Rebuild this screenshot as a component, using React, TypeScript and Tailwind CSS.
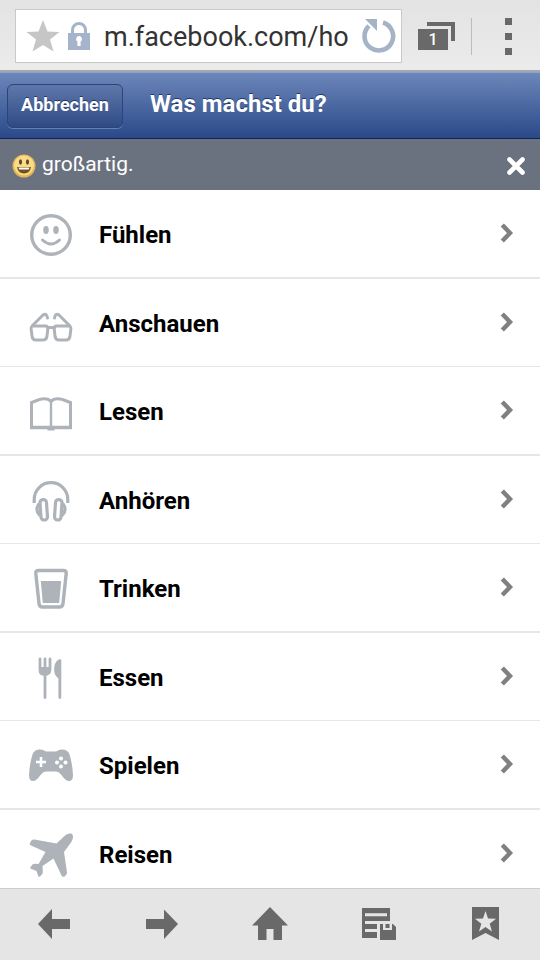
import type { ReactNode } from "react";

const stroke = {
  fill: "none",
  stroke: "currentColor",
  strokeWidth: 3.4,
  strokeLinecap: "round" as const,
  strokeLinejoin: "round" as const,
};

const activities: { label: string; icon: ReactNode }[] = [
  {
    label: "Fühlen",
    icon: (
      <>
        <circle cx="22" cy="22" r="19.300" {...stroke} />
        <ellipse cx="17" cy="17" rx="2.800" ry="4" fill="currentColor" />
        <ellipse cx="27" cy="17" rx="2.800" ry="4" fill="currentColor" />
        <path d="M13.500 27q8.500 8 17 0" {...stroke} strokeWidth={3} />
      </>
    ),
  },
  {
    label: "Anschauen",
    icon: (
      <g {...stroke} strokeWidth={3}>
        <path d="M4 24h12.500q2.500 0 2.300 3l-.8 7q-.5 4-4 4H7q-3.500 0-4-4l-.8-6.500q-.3-3.500 1.800-3.500z" />
        <path d="M40 24H27.500q-2.500 0-2.300 3l.8 7q.5 4 4 4h7q3.500 0 4-4l.8-6.500q.3-3.500-1.800-3.500z" />
        <path d="M18.500 25.500h7" />
        <path d="M3.500 23.500 14 13q3.500-2.500 4.500 3" />
        <path d="M40.500 23.500 30 13q-3.500-2.500-4.500 3" />
      </g>
    ),
  },
  {
    label: "Lesen",
    icon: (
      <g {...stroke} strokeWidth={3} strokeLinecap="butt" strokeLinejoin="miter">
        <path d="M2.500 37.500V12.500l4-1.500q11-4.500 15.500.500 4.500-5 15.500-.5l4 1.500v25" />
        <path d="M22 12v25" strokeWidth="2.400" />
        <path d="M1 37.500h42" strokeWidth="3.400" />
        <path d="M18.500 39h7" />
      </g>
    ),
  },
  {
    label: "Anhören",
    icon: (
      <g {...stroke} strokeWidth={3.2}>
        <path d="M5.200 24v-3.500a16.800 16.800 0 0 1 33.600 0V24" strokeLinecap="butt" />
        <rect x="11.500" y="20.500" width="6.500" height="20.500" rx="3.200" transform="rotate(-4 15 31)" />
        <rect x="26" y="20.500" width="6.500" height="20.500" rx="3.200" transform="rotate(4 29 31)" />
        <path d="M9.500 25.500Q6 31 10.500 36M34.500 25.500q3.500 5.500-1 10.500" />
      </g>
    ),
  },
  {
    label: "Trinken",
    icon: (
      <>
        <path
          d="M9.500 3.500h25q3 0 2.700 3l-3.200 30q-.4 3.500-3.500 3.500h-17q-3.100 0-3.500-3.500l-3.200-30q-.3-3 2.700-3z"
          {...stroke}
        />
        <path d="M11.800 14h20.400l-2 22H13.800z" fill="currentColor" />
      </>
    ),
  },
  {
    label: "Essen",
    icon: (
      <>
        <path d="M11 3v11q0 4.500 4.800 4.500T21 14V3M16 3v38.500" {...stroke} strokeWidth={2.8} />
        <path d="M11 11h10v4q-1 4-5 4t-5-4z" fill="currentColor" />
        <path
          d="M32.300 4.500q0-1.500-2-1.200-3.700 1.200-5 7.200-1.200 8 4.100 12V41q0 2 1.500 2t1.400-2z"
          fill="currentColor"
        />
      </>
    ),
  },
  {
    label: "Spielen",
    icon: (
      <>
        <path
          d="M10 5.500q-5 .5-6.500 5Q.5 20 0 31q0 6 4 6 3.500 0 7.500-6 2.500-3.500 5-3.500h11q2.500 0 5 3.500 4 6 7.500 6 4 0 4-6-.5-11-3.500-20.500-1.500-4.500-6.500-5-3-.3-5 1-1.500 1-3 1h-8q-1.500 0-3-1-2-1.300-5-1z"
          fill="currentColor"
        />
        <path d="M12 13v10M7 18h10" stroke="white" strokeWidth="2.600" />
        <g fill="white">
          <circle cx="32" cy="14.500" r="2" />
          <circle cx="32" cy="22.500" r="2" />
          <circle cx="28" cy="18.500" r="2" />
          <circle cx="36.500" cy="18.500" r="2" />
        </g>
      </>
    ),
  },
  {
    label: "Reisen",
    icon: (
      <path
        d="M27.500 10.500 36 2.500q3-2.500 6.500-2 2 1 1.300 5-.8 3-3.300 6L35 19l3 20.500q0 1.500-1 2.500l-1.500 1.500q-2 1-3-1L24.500 25.500 13.500 33l.3 6q0 1.500-1 2.500L11 43.500q-1.500 1-2-1L7.500 38l-5-2q-2-.7-1-2l2-2.500q1-1 2.500-.8l3.500.3 7-12L2 12.500q-2-1-1-2.500l1.500-2.500q1-1.500 3-1z"
        fill="currentColor"
      />
    ),
  },
];

function Icon({ children, className }: { children: ReactNode; className: string }) {
  return (
    <svg viewBox="0 0 44 44" className={className} aria-hidden="true">
      {children}
    </svg>
  );
}

function BrowserBar() {
  return (
    <header className="flex h-[72px] shrink-0 items-center border-b-2 border-[#a4a7ac] bg-linear-to-b from-[#e3e3e3] to-[#ebebeb] pt-0.5 pl-[15px]">
      <div className="flex h-[54px] min-w-0 flex-1 items-center border border-[#c9c9c9] bg-white pr-1 pl-2.5">
        <button aria-label="Lesezeichen" className="shrink-0">
          <svg width="34" height="34" viewBox="0 0 34 34" fill="#c6c6c6" aria-hidden="true">
            <path d="M17 1l4.500 11.500 12 .5-9.500 7.500 3.500 12L17 26 6.500 32.500l3.500-12L.5 13l12-.5z" />
          </svg>
        </button>
        <svg width="22" height="30" viewBox="0 0 22 30" className="ml-2 shrink-0" aria-hidden="true">
          <path d="M4.500 13V9a6.500 6.500 0 0 1 13 0v4" fill="none" stroke="#a5b3cb" strokeWidth="3" />
          <path d="M0 12h22v17H0z" fill="#a5b3cb" />
          <path d="M11 15a3 3 0 0 1 1.600 5.500V25H9.400v-4.500A3 3 0 0 1 11 15z" fill="white" />
        </svg>
        <input
          aria-label="Adresse"
          defaultValue="m.facebook.com/ho"
          className="ml-3.5 h-9 min-w-0 flex-1 bg-transparent pt-0.5 text-[27px] leading-8 text-[#333] outline-none"
        />
        <button aria-label="Neu laden" className="shrink-0">
          <svg width="36" height="36" viewBox="0 0 36 36" aria-hidden="true">
            <path d="M22 4.500A14.300 14.300 0 1 1 8 7.800" fill="none" stroke="#a5b3c6" strokeWidth="4.600" />
            <path d="M4 1h12v12z" fill="#a5b3c6" />
          </svg>
        </button>
      </div>
      <button aria-label="Tabs" className="relative ml-4 h-7 w-[38px] shrink-0">
        <svg width="38" height="28" viewBox="0 0 38 28" fill="#696969" aria-hidden="true">
          <path d="M9 0h28v19h-4V4H9z" />
          <path d="M0 7h30v21H0z" />
        </svg>
        <span className="absolute top-2 left-0 w-[30px] text-center text-base leading-5 font-medium text-white">
          1
        </span>
      </button>
      <div className="ml-[15px] h-[37px] w-px bg-[#bcbcbc]" />
      <button aria-label="Menü" className="flex w-[68px] shrink-0 flex-col items-center gap-2 pl-1">
        <span className="h-[7px] w-[7px] bg-[#696969]" />
        <span className="h-[7px] w-[7px] bg-[#696969]" />
        <span className="h-[7px] w-[7px] bg-[#696969]" />
      </button>
    </header>
  );
}

function TitleBar() {
  return (
    <div className="flex h-[67px] shrink-0 items-center border-t border-b border-t-[#8fa3ca] border-b-[#0f2450] bg-linear-to-b from-[#6c87ba] to-[#2b4989] px-[7px]">
      <button className="h-11 w-[116px] rounded-md border border-[#2c4479] bg-linear-to-b from-[#5f78aa] to-[#2f4b86] pb-0.5 text-lg font-bold text-white shadow-[0_1px_0_#6680b3] text-shadow-[0_-1px_0_#1f3769]">
        Abbrechen
      </button>
      <h1 className="ml-[27px] pb-1 text-2xl font-bold text-white text-shadow-[0_-1px_0_#1f3769]">
        Was machst du?
      </h1>
    </div>
  );
}

function StatusBar() {
  return (
    <div className="flex h-[51px] shrink-0 items-center bg-[#6b727f] pr-[14px] pl-3">
      <svg width="24" height="24" viewBox="0 0 24 24" className="mt-0.5" aria-hidden="true">
        <circle cx="12" cy="12" r="11.500" fill="#e2b65a" />
        <circle cx="12" cy="11.500" r="10" fill="#f9dc85" />
        <ellipse cx="8.500" cy="8" rx="1.500" ry="2.800" fill="#5b4420" />
        <ellipse cx="15.500" cy="8" rx="1.500" ry="2.800" fill="#5b4420" />
        <path d="M5 13h14q-1 6.500-7 6.500T5 13z" fill="#76501c" />
        <path d="M6.500 13.500h11l-.7 2H7.200z" fill="white" />
      </svg>
      <p className="ml-1.5 flex-1 pb-0.5 text-[21px] leading-7 text-white">großartig.</p>
      <button aria-label="Entfernen">
        <svg width="20" height="20" viewBox="0 0 20 20" className="mt-0.5" aria-hidden="true">
          <path d="M3.500 3.500l13 13M16.500 3.500l-13 13" stroke="white" strokeWidth="4.600" strokeLinecap="round" />
        </svg>
      </button>
    </div>
  );
}

function ActivityList() {
  return (
    <ul className="min-h-0 flex-1 overflow-hidden bg-white">
      {activities.map(({ label, icon }) => (
        <li
          key={label}
          className="border-[#e6e6e6] odd:h-[89px] odd:border-b-2 even:h-[88px] even:border-b"
        >
          <button className="flex h-full w-full items-center pt-0.5 pr-[26px] pl-[29px] text-left">
            <Icon className="size-11 text-[#aeb3ba]">{icon}</Icon>
            <span className="ml-[26px] flex-1 text-2xl font-bold text-black">{label}</span>
            <svg width="14" height="20" viewBox="0 0 14 20" className="mb-1" aria-hidden="true">
              <path
                d="M3.800 3.500l6.200 6.500-6.200 6.500"
                fill="none"
                stroke="#808080"
                strokeWidth="4.400"
                strokeLinecap="square"
                strokeLinejoin="miter"
              />
            </svg>
          </button>
        </li>
      ))}
    </ul>
  );
}

const tools: { label: string; icon: ReactNode }[] = [
  { label: "Zurück", icon: <path d="M6 22 20 7v10h18v10H20v10z" /> },
  { label: "Vorwärts", icon: <path d="M38 22 24 7.500V17H6v10h18v10z" /> },
  { label: "Startseite", icon: <path d="M22 5 4 23.500h6V38h8.500V27h7v11H34V23.500h6z" /> },
  {
    label: "Gespeicherte Seiten",
    icon: (
      <>
        <path d="M6 6h28v15H22v15H6z" />
        <path d="M9 11.200h22v3H9zM9 19h25v3H9zM9 27h13v3H9z" fill="#e5e5e5" />
        <path d="M21 20h3v18h-3z" fill="#e5e5e5" />
        <path d="M24 22h13l3 3v13H24z" />
        <path d="M27 22h9v6h-9z" fill="#e5e5e5" />
        <path d="M29.500 22h4v4h-4z" />
      </>
    ),
  },
  {
    label: "Lesezeichenliste",
    icon: (
      <>
        <path d="M8 5h27v33l-13.500-7L8 38z" />
        <path
          d="M21.500 9l2.500 7.500 8 .3-6.300 4.900 2.300 7.800-6.500-4.500-6.500 4.500 2.300-7.800L11 16.800l8-.3z"
          fill="#e5e5e5"
        />
      </>
    ),
  },
];

function ToolBar() {
  return (
    <nav className="flex h-[72px] shrink-0 border-t border-[#cdcdcd] bg-[#e5e5e5] pb-0.5">
      {tools.map(({ label, icon }) => (
        <button key={label} aria-label={label} className="flex flex-1 items-center justify-center">
          <Icon className="size-11 fill-[#696969]">{icon}</Icon>
        </button>
      ))}
    </nav>
  );
}

export default function App() {
  return (
    <div className="flex h-dvh flex-col overflow-hidden bg-white font-['Roboto','Noto_Sans',sans-serif]">
      <BrowserBar />
      <TitleBar />
      <StatusBar />
      <ActivityList />
      <ToolBar />
    </div>
  );
}
